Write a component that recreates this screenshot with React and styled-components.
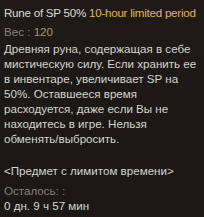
import React from "react";
import styled, { createGlobalStyle } from "styled-components";

const Global = createGlobalStyle`
  html, body {
    margin: 0;
    padding: 0;
    background: #1b1815;
  }
`;

const description = [
  "Древняя руна, содержащая в себе",
  "мистическую силу. Если хранить ее",
  "в инвентаре, увеличивает SP на",
  "50%. Оставшееся время",
  "расходуется, даже если Вы не",
  "находитесь в игре. Нельзя",
  "обменять/выбросить.",
];

export default function App() {
  return (
    <>
      <Global />
      <Tooltip>
        <Title>
          Rune of SP 50% <Gold>10-hour limited period</Gold>
        </Title>
        <Weight>
          Вес : <Tan>120</Tan>
        </Weight>
        <Block>
          {description.map((l) => (
            <Line key={l}>{l}</Line>
          ))}
        </Block>
        <Limited>&lt;Предмет с лимитом времени&gt;</Limited>
        <Muted>Осталось: :</Muted>
        <Line>0 дн. 9 ч 57 мин</Line>
      </Tooltip>
    </>
  );
}

const Tooltip = styled.div`
  width: 204px;
  height: 217px;
  box-sizing: border-box;
  padding: 5px 4px 0 4px;
  background: linear-gradient(180deg, #1e1a17 0%, #1b1815 60%, #1a1714 100%);
  font-family: "Liberation Sans", Arial, sans-serif;
  font-size: 11.6px;
  color: #d6d6d2;
  overflow: hidden;
`;

const Title = styled.div`
  line-height: 15px;
  white-space: nowrap;
  letter-spacing: -0.25px;
  color: #dcdcd8;
`;

const Gold = styled.span`
  color: #e2b84a;
`;

const Weight = styled.div`
  margin-top: 4px;
  line-height: 15px;
  color: #85827c;
`;

const Tan = styled.span`
  color: #b39664;
`;

const Block = styled.div`
  margin-top: 2px;
`;

const Line = styled.div`
  line-height: 15px;
  white-space: nowrap;
`;

const Limited = styled(Line)`
  margin-top: 17px;
`;

const Muted = styled(Line)`
  margin-top: 5px;
  color: #85827c;
`;
